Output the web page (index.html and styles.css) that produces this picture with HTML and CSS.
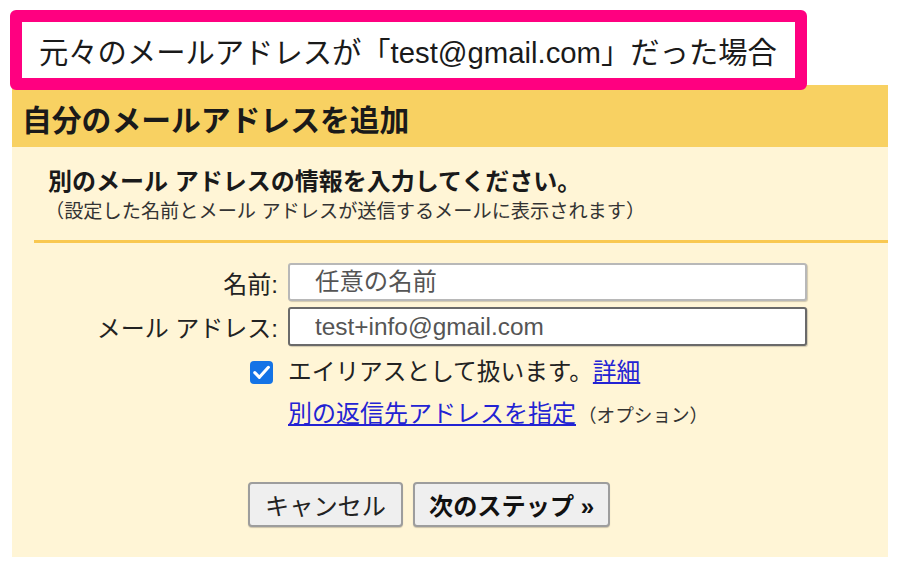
FILE: index.html
```html
<!DOCTYPE html>
<html lang="ja">
<head>
<meta charset="utf-8">
<title>自分のメールアドレスを追加</title>
<link rel="stylesheet" href="styles.css">
</head>
<body>
<div class="callout">元々のメールアドレスが「test@gmail.com」だった場合</div>
<div class="panel">
  <div class="panel-head">自分のメールアドレスを追加</div>
  <div class="panel-body">
    <div class="intro-title">別のメール アドレスの情報を入力してください。</div>
    <div class="intro-sub">（設定した名前とメール アドレスが送信するメールに表示されます）</div>
    <div class="rule"></div>
    <div class="form">
      <label class="lbl" for="name">名前:</label>
      <input class="field" id="name" type="text" placeholder="任意の名前">
      <label class="lbl" for="mail">メール アドレス:</label>
      <input class="field field-focus" id="mail" type="text" placeholder="test+info@gmail.com">
      <span class="check-cell"><span class="check"><svg viewBox="0 0 24 24" width="23" height="23"><path d="M5 12.2 L9.8 17 L19.2 6.6" fill="none" stroke="#fff" stroke-width="3.2" stroke-linecap="round" stroke-linejoin="round"/></svg></span></span>
      <span class="alias">エイリアスとして扱います。<a href="#" class="link">詳細</a></span>
      <span></span>
      <span class="reply"><a href="#" class="link">別の返信先アドレスを指定</a><span class="opt">（オプション）</span></span>
    </div>
    <div class="buttons">
      <button class="btn">キャンセル</button>
      <button class="btn btn-bold">次のステップ »</button>
    </div>
  </div>
</div>
</body>
</html>
```
FILE: styles.css
```css
* { box-sizing: border-box; }
html, body { margin: 0; padding: 0; background: #fff; }
body {
  font-family: "Liberation Sans", "Noto Sans CJK JP", sans-serif;
  color: #222;
  width: 904px;
  height: 566px;
  overflow: hidden;
}
.callout {
  position: relative;
  z-index: 2;
  margin: 10px 0 0 10px;
  width: 797px;
  height: 80px;
  border: 12px solid #ff0080;
  border-radius: 6px;
  background: #fff;
  padding-left: 17px;
  display: flex;
  align-items: center;
  font-size: 29.3px;
  color: #1a1a1a;
  white-space: nowrap;
}
.panel {
  margin: -5px 0 0 12px;
  width: 876px;
  height: 472px;
  background: #fff5d6;
}
.panel-head {
  height: 62px;
  background: #f8d162;
  padding: 3px 0 0 10px;
  display: flex;
  align-items: center;
  font-size: 29.8px;
  font-weight: bold;
  color: #1a1a1a;
}
.panel-body {
  padding-top: 21px;
}
.intro-title {
  padding-left: 36px;
  font-size: 24px;
  font-weight: bold;
  line-height: 28px;
  color: #1a1a1a;
}
.intro-sub {
  padding-left: 33px;
  margin-top: 3px;
  font-size: 19.2px;
  line-height: 26px;
  color: #333;
}
.rule {
  margin: 15px 0 0 22px;
  height: 3px;
  background: #f9c851;
}
.form {
  margin-top: 20px;
  display: grid;
  grid-template-columns: 266px 519px;
  column-gap: 10px;
  align-items: center;
}
.lbl {
  text-align: right;
  font-size: 24px;
  color: #222;
}
.field {
  height: 38px;
  width: 519px;
  border: 2px solid #b8b8b8;
  border-radius: 3px;
  box-shadow: 1px 1px 1px rgba(0,0,0,0.18);
  background: #fff;
  padding: 0 0 0 25px;
  font-family: "Liberation Sans", "Noto Sans CJK JP", sans-serif;
  font-size: 24.4px;
  color: #333;
  outline: none;
}
.field::placeholder { color: #555; }
.field-focus {
  margin-top: 6px;
  height: 39px;
  border-color: #6a6a6a;
}
.form label:nth-of-type(2) { margin-top: 6px; }
.check-cell {
  display: flex;
  justify-content: flex-end;
  padding-right: 5px;
  margin-top: 12px;
}
.check {
  width: 23px;
  height: 23px;
  border-radius: 4px;
  background: #1473e6;
  display: flex;
}
.alias {
  margin-top: 12px;
  font-size: 23.7px;
  line-height: 28px;
  color: #222;
}
.link {
  color: #2323d3;
  text-decoration: underline;
  text-underline-offset: 2px;
}
.reply {
  margin-top: 14px;
  font-size: 24px;
  line-height: 28px;
}
.opt {
  font-size: 18.6px;
  color: #333;
  margin-left: 2px;
}
.buttons {
  margin: 52px 0 0 236px;
  display: flex;
  gap: 10px;
}
.btn {
  height: 45px;
  padding: 0 15px;
  background: #efefef;
  border: 2px solid #9d9d9d;
  border-radius: 4px;
  box-shadow: 0 1px 1px rgba(0,0,0,0.2);
  font-family: "Liberation Sans", "Noto Sans CJK JP", sans-serif;
  font-size: 24.2px;
  color: #222;
}
.btn-bold {
  font-weight: bold;
  color: #111;
  padding: 0 14px;
}
```
